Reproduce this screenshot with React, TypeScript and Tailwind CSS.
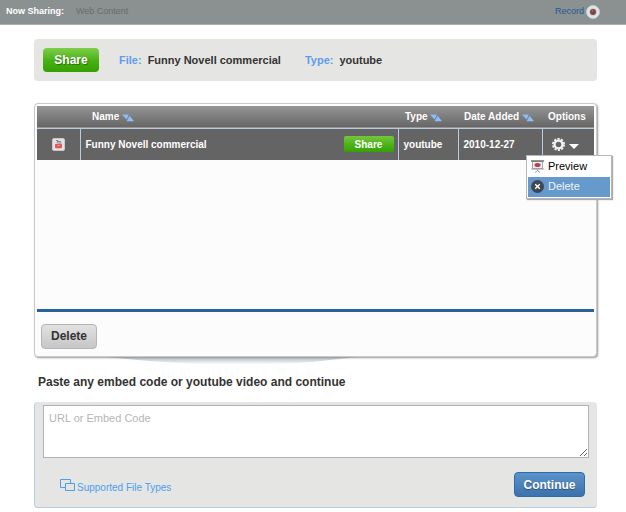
import React from "react";

const files = [
  { id: 1, name: "Funny Novell commercial", type: "youtube", added: "2010-12-27" },
];

function SortIcon() {
  return (
    <svg width="12" height="8" viewBox="0 0 12 8" className="inline-block" aria-hidden="true">
      <path d="M0 0.5h6.8L4.6 5.5z" fill="#8ac0f7" />
      <path d="M4.6 7.2H12L7.6 1.8z" fill="#8ac0f7" />
    </svg>
  );
}

function RecordIcon() {
  return (
    <svg width="14" height="14" viewBox="0 0 14 14" aria-hidden="true">
      <circle cx="7" cy="7" r="6.5" fill="#e2e7ea" stroke="#c3cacd" />
      <circle cx="7" cy="7" r="4.2" fill="#cdd2d6" />
      <circle cx="7" cy="7" r="3" fill="#824341" />
      <circle cx="6.3" cy="6" r="0.7" fill="#b98585" />
    </svg>
  );
}

function YoutubeIcon() {
  return (
    <svg width="13" height="13" viewBox="0 0 13 13" aria-hidden="true">
      <rect x="0.5" y="0.5" width="12" height="12" rx="1.5" fill="#e2e2e2" stroke="#c8c8c8" />
      <path d="M4 2.5h1.5v2.5M6 3.5h3M6.5 5h3" fill="none" stroke="#858585" strokeWidth="1.2" />
      <rect x="3" y="5.8" width="7" height="4.5" rx="1.2" fill="#e4555a" />
      <path d="M5 7.5h3" fill="none" stroke="#f0989b" strokeWidth="0.9" />
    </svg>
  );
}

function GearIcon() {
  return (
    <svg width="13" height="13" viewBox="0 0 13 13" aria-hidden="true">
      <circle cx="6.5" cy="6.5" r="3.9" fill="none" stroke="#f4f4f4" strokeWidth="2.2" />
      <circle cx="6.5" cy="6.5" r="5.6" fill="none" stroke="#f4f4f4" strokeWidth="1.8" strokeDasharray="2.2 1.32" />
    </svg>
  );
}

function PreviewIcon() {
  return (
    <svg width="13" height="13" viewBox="0 0 13 13" aria-hidden="true">
      <path d="M1.5 1.5h10v7h-10z" fill="#eee" stroke="#a5a5a5" />
      <path d="M0 1h13" stroke="#777" strokeWidth="1.6" />
      <path d="M0 9h13" stroke="#999" />
      <ellipse cx="6.5" cy="5" rx="3" ry="2" fill="#c9373c" />
      <path d="M6.5 5l2.8-1.2v1.6z" fill="#4f6d9c" />
      <path d="M6.5 9.5v1.5M6.5 10.5l-2.5 2M6.5 10.5l2.5 2" stroke="#999" fill="none" />
    </svg>
  );
}

function DeleteIcon() {
  return (
    <svg width="13" height="13" viewBox="0 0 13 13" aria-hidden="true">
      <circle cx="6.5" cy="6.5" r="6.5" fill="#3d4852" />
      <path d="M4.2 4.2l4.6 4.6M8.8 4.2L4.2 8.8" stroke="#fff" strokeWidth="1.4" />
    </svg>
  );
}

function WindowsIcon() {
  return (
    <svg width="15" height="13" viewBox="0 0 15 13" fill="none" stroke="#4a9ff0" aria-hidden="true">
      <path d="M5.5 8.5h-5v-8h10v4" />
      <path d="M5.5 4.5h9v7h-9z" />
    </svg>
  );
}

function OptionsMenu() {
  return (
    <div className="absolute right-[-18px] top-[26px] z-10 w-[86px] border border-[#b5b8bb] bg-white p-px text-[11px] font-normal shadow-[1px_1px_1px_#aaa]">
      <button className="flex h-5 w-full items-center gap-1 px-[3px] text-black">
        <PreviewIcon />
        Preview
      </button>
      <button className="flex h-5 w-full items-center gap-1 bg-[#6699cc] px-[3px] text-[#eef4fb]">
        <DeleteIcon />
        Delete
      </button>
    </div>
  );
}

function FileTable() {
  return (
    <table className="w-full table-fixed border-collapse text-left text-[10px] font-bold text-white">
      <colgroup>
        <col className="w-[43px]" />
        <col />
        <col className="w-[60px]" />
        <col className="w-[84px]" />
        <col className="w-[52px]" />
      </colgroup>
      <thead>
        <tr className="h-[22px] border-b border-[#b9cbdc] bg-linear-to-b from-[#959595] to-[#676767]">
          <th></th>
          <th className="pl-3">
            Name <SortIcon />
          </th>
          <th className="pl-[7px]">
            Type <SortIcon />
          </th>
          <th className="whitespace-nowrap pl-[6px]">
            Date Added <SortIcon />
          </th>
          <th className="pl-[6px]">Options</th>
        </tr>
      </thead>
      <tbody>
        {files.map((file) => (
          <tr key={file.id} className="h-8 bg-[#646464]">
            <td>
              <div className="flex justify-center">
                <YoutubeIcon />
              </div>
            </td>
            <td className="border-l border-[#b9cbdc] pl-[5px] pr-1">
              <div className="flex items-center justify-between">
                {file.name}
                <button className="h-4 w-[50px] rounded-xs bg-linear-to-b from-[#74c63c] via-[#4db51a] to-[#35a000] text-[10px] text-white">
                  Share
                </button>
              </div>
            </td>
            <td className="border-l border-[#b9cbdc] pl-[5px]">{file.type}</td>
            <td className="border-l border-[#b9cbdc] pl-[5px]">{file.added}</td>
            <td className="relative border-l border-[#b9cbdc]">
              <button className="flex w-full items-center gap-1 pl-[9px]" aria-label="Options">
                <GearIcon />
                <svg width="10" height="5" viewBox="0 0 10 5" className="mt-1" aria-hidden="true">
                  <path d="M0 0h10L5 5z" fill="#fff" />
                </svg>
              </button>
              <OptionsMenu />
            </td>
          </tr>
        ))}
      </tbody>
    </table>
  );
}

function App() {
  return (
    <div className="bg-white font-['Liberation_Sans',Arial,sans-serif] text-[#333]">
      <header className="flex h-[25px] items-center border-b border-[#a9adad] bg-[#8b9190] pl-[6px] pr-[26px] text-[9px]">
        <span className="font-bold text-white">Now Sharing:</span>
        <span className="ml-3 text-[#686c6c]">Web Content</span>
        <a href="#record" className="ml-auto flex items-center gap-[2px] text-[#23589c]">
          Record
          <RecordIcon />
        </a>
      </header>

      <main className="pl-[34px] pr-[29px] pt-[14px]">
        <section className="flex h-[42px] items-center rounded-sm bg-[#e5e5e3] pl-[9px] text-[11px] font-bold">
          <button className="h-6 w-14 rounded-sm bg-linear-to-b from-[#7fce48] via-[#49b315] to-[#35a000] text-xs text-white text-shadow-[1px_1px_1px_#00000060]">
            Share
          </button>
          <span className="ml-5 text-[#5e9cec]">File:</span>
          <span className="ml-[6px]">Funny Novell commercial</span>
          <span className="ml-6 text-[#5e9cec]">Type:</span>
          <span className="ml-[6px]">youtube</span>
        </section>

        <section className="relative mt-[22px]">
          <svg
            viewBox="0 0 270 8"
            preserveAspectRatio="none"
            className="absolute -bottom-[7px] left-[11%] h-2 w-[48%]"
            aria-hidden="true"
          >
            <defs>
              <linearGradient id="curl" x1="0" y1="0" x2="0" y2="1">
                <stop offset="0" stopColor="#a6b4c0" />
                <stop offset="0.5" stopColor="#ccd5dd" />
                <stop offset="1" stopColor="#fafbfc" />
              </linearGradient>
            </defs>
            <path d="M0 0h270L225 5Q200 8 160 8H110Q80 8 0 0z" fill="url(#curl)" />
          </svg>
          <div className="relative rounded-sm border border-[#c9c9c9] bg-[#fcfcfc] px-[2px] pt-[2px] shadow-[1px_1px_2px_#999]">
            <div className="h-[206px] border-b-3 border-[#28619b]">
              <FileTable />
            </div>
            <div className="h-11 px-1 pt-[11px]">
              <button className="h-[25px] w-14 rounded-sm border border-[#b5b5b5] bg-linear-to-b from-[#e2e2e2] to-[#c6c6c6] text-xs font-bold text-[#333]">
                Delete
              </button>
            </div>
          </div>
        </section>

        <label htmlFor="embed" className="mt-[17px] block pl-1 text-xs leading-4 font-bold">
          Paste any embed code or youtube video and continue
        </label>
        <section className="mt-3 rounded-sm border-b border-l border-[#b5cde0] bg-[#e5e5e3] pb-[10px] pl-2 pr-2 pt-[3px]">
          <textarea
            id="embed"
            placeholder="URL or Embed Code"
            className="block h-[53px] w-full border border-[#aeb1b6] bg-white px-[5px] py-1 text-[11px] leading-4 placeholder:text-[#b5b5b5]"
          />
          <div className="mt-[14px] flex items-center justify-between pl-[17px] pr-1">
            <a href="#types" className="flex items-center gap-[2px] pt-[2px] text-[10px] text-[#4a9ff0]">
              <WindowsIcon />
              <span className="pt-1">Supported File Types</span>
            </a>
            <button className="h-[25px] w-[71px] rounded-sm border border-[#2f6ba6] bg-linear-to-b from-[#5b93c9] to-[#3c72ab] text-xs font-bold text-white text-shadow-[0_1px_1px_#00000060]">
              Continue
            </button>
          </div>
        </section>
      </main>
    </div>
  );
}

export default App;
